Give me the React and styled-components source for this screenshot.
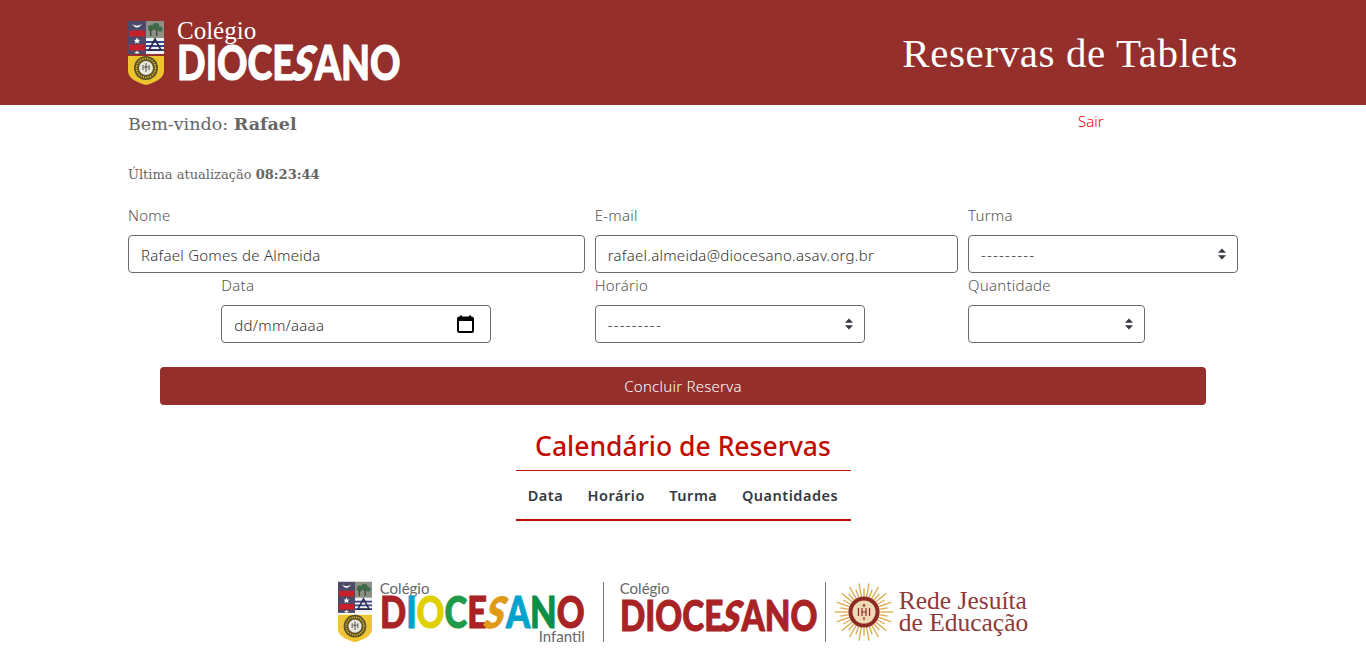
import React from "react";
import styled, { createGlobalStyle } from "styled-components";

const WINE = "#942f2c";
const LOGO_RED = "#a92224";
const RED = "#c00d00";
const SERIF = '"Liberation Serif", "DejaVu Serif", serif';
const SLAB = '"DejaVu Serif", "Liberation Serif", serif';
const SANS = '"Noto Sans", "Open Sans", sans-serif';
const INFANTIL_COLORS = ["#a92224", "#00a3cc", "#e0d000", "#1f9a48", "#a92224", "#e09a18", "#00a3cc", "#0a8f45", "#a92224"];

function Crest({ width, height }) {
  return (
    <svg width={width} height={height} viewBox="0 0 36 64">
      <rect x="0" y="0" width="18" height="33" fill="#4c4a68" />
      <path d="M4 3 Q9 10 14 3 Q9 6.5 4 3Z" fill="#fff" />
      <rect x="1" y="9.5" width="16" height="6" fill="#c8202a" />
      <path d="M9 16.5l1 2.2 2.3.2-1.8 1.4.6 2.2L9 21.5l-2.1 1 .6-2.2-1.8-1.4 2.3-.2z" fill="#fff" />
      <rect x="1" y="23.5" width="16" height="6" fill="#c8202a" />
      <path d="M9 29.5l.8 1.6 1.8.2-1.3 1.1H7.7l-1.3-1.1 1.8-.2z" fill="#fff" />
      <rect x="18" y="0" width="18" height="17" fill="#8d9084" />
      <circle cx="23" cy="7" r="3" fill="#3f6a4c" />
      <circle cx="28" cy="5.5" r="3.4" fill="#3f6a4c" />
      <circle cx="32" cy="8" r="2.6" fill="#3f6a4c" />
      <rect x="22" y="8" width="1.4" height="7" fill="#3a4a3a" />
      <rect x="28" y="8" width="1.4" height="7" fill="#3a4a3a" />
      <rect x="18" y="17" width="18" height="16" fill="#f2f2f6" />
      <path d="M18 21h18M18 25h18M18 29h18" stroke="#37448c" strokeWidth="1.8" />
      <path d="M27 18 L33 29 H21Z" fill="none" stroke="#2a2a45" strokeWidth="1.6" />
      <path d="M0 35 H36 V50 Q36 59 18 64 Q0 59 0 50Z" fill="#eec52e" />
      <circle cx="18" cy="47" r="12" fill="#5c5228" />
      <circle cx="18" cy="47" r="9.5" fill="none" stroke="#eec52e" strokeWidth="1.6" strokeDasharray="1.2 1.2" />
      <circle cx="18" cy="47" r="7" fill="#e9e6da" />
      <path d="M15 44v5M18 42v9M21 44v5M16 46h4" stroke="#4a4a4a" strokeWidth="1" fill="none" />
    </svg>
  );
}

function JesuitSun() {
  const rays = Array.from({ length: 36 }, (_, i) => (i * Math.PI * 2) / 36);
  return (
    <svg width="58" height="58" viewBox="0 0 58 58">
      {rays.map((a, i) => {
        const end = i % 2 ? 24 : 29;
        return (
          <line
            key={i}
            x1={29 + Math.cos(a) * 15}
            y1={29 + Math.sin(a) * 15}
            x2={29 + Math.cos(a) * end}
            y2={29 + Math.sin(a) * end}
            stroke="#dca94c"
            strokeWidth="1.3"
          />
        );
      })}
      <circle cx="29" cy="29" r="15.5" fill="#8f2a28" />
      <circle cx="29" cy="29" r="11.5" fill="#efd9b4" />
      <path d="M23.5 25v8M27 25v8M31 25v8M34.5 25v8M27 29h4M29 21v3M27.8 22.2h2.4M29 34v3" stroke="#8f2a28" strokeWidth="1.2" fill="none" />
    </svg>
  );
}

function CalendarIcon() {
  return (
    <svg width="17" height="18" viewBox="0 0 17 18">
      <path d="M4 0.5v3M13 0.5v3" stroke="#000" strokeWidth="2" />
      <rect x="1" y="2.5" width="15" height="14.5" rx="1.5" fill="none" stroke="#000" strokeWidth="2" />
      <rect x="1" y="2.5" width="15" height="3.5" fill="#000" />
    </svg>
  );
}

function SelectArrows() {
  return (
    <svg width="10" height="12" viewBox="0 0 10 12">
      <path d="M5 0.5 L9 4.8 H1Z M5 11.5 L1 7.2 H9Z" fill="#343a40" />
    </svg>
  );
}

function Wordmark({ size, width, colors, color, top }) {
  return (
    <WordmarkBox $size={size} $width={width} $top={top}>
      <WordmarkText $size={size} $color={color}>
        {"DIOCESANO".split("").map((letter, i) => (
          <WordmarkLetter key={i} $color={colors && colors[i]} $slant={letter === "S"}>
            {letter}
          </WordmarkLetter>
        ))}
      </WordmarkText>
    </WordmarkBox>
  );
}

export default function App() {
  return (
    <>
      <GlobalStyle />
      <Header>
        <HeaderInner>
          <HeaderLogo>
            <Crest width={36} height={64} />
            <LogoStack>
              <HeaderCollege>Colégio</HeaderCollege>
              <Wordmark size={47} width={226} color="#fff" top={-2} />
            </LogoStack>
          </HeaderLogo>
          <PageTitle>Reservas de Tablets</PageTitle>
        </HeaderInner>
      </Header>

      <Container>
        <WelcomeRow>
          <Welcome>
            Bem-vindo: <strong>Rafael</strong>
          </Welcome>
          <Logout href="#">Sair</Logout>
        </WelcomeRow>

        <Updated>
          Última atualização <strong>08:23:44</strong>
        </Updated>

        <FormGrid>
          <Field $span={5}>
            <Label>Nome</Label>
            <Input readOnly value="Rafael Gomes de Almeida" />
          </Field>
          <Field $span={4}>
            <Label>E-mail</Label>
            <Input readOnly value="rafael.almeida@diocesano.asav.org.br" />
          </Field>
          <Field $span={3}>
            <Label>Turma</Label>
            <Control>
              <Select defaultValue="">
                <option value="">---------</option>
              </Select>
              <ControlIcon><SelectArrows /></ControlIcon>
            </Control>
          </Field>

          <Field $start={2} $span={3}>
            <Label>Data</Label>
            <Control>
              <Input readOnly value="dd/mm/aaaa" />
              <ControlIcon $right={17}><CalendarIcon /></ControlIcon>
            </Control>
          </Field>
          <Field $start={6} $span={3}>
            <Label>Horário</Label>
            <Control>
              <Select defaultValue="">
                <option value="">---------</option>
              </Select>
              <ControlIcon><SelectArrows /></ControlIcon>
            </Control>
          </Field>
          <Field $start={10} $span={2}>
            <Label>Quantidade</Label>
            <Control>
              <Select defaultValue="">
                <option value=""></option>
              </Select>
              <ControlIcon><SelectArrows /></ControlIcon>
            </Control>
          </Field>
        </FormGrid>

        <SubmitButton type="button">Concluir Reserva</SubmitButton>

        <CalendarTable>
          <Caption>Calendário de Reservas</Caption>
          <thead>
            <tr>
              <HeadCell>Data</HeadCell>
              <HeadCell>Horário</HeadCell>
              <HeadCell>Turma</HeadCell>
              <HeadCell>Quantidades</HeadCell>
            </tr>
          </thead>
        </CalendarTable>

        <Footer>
          <FooterCrest>
            <Crest width={34} height={62} />
          </FooterCrest>
          <FooterBrand>
            <FooterCollege>Colégio</FooterCollege>
            <Wordmark size={43} width={205} colors={INFANTIL_COLORS} top={-5} />
            <Infantil>Infantil</Infantil>
          </FooterBrand>
          <Divider $left={18} $right={16} />
          <FooterBrand>
            <FooterCollege>Colégio</FooterCollege>
            <Wordmark size={41.5} width={197} color={LOGO_RED} top={0} />
          </FooterBrand>
          <Divider $left={8} $right={9} />
          <JesuitSun />
          <Network>
            Rede Jesuíta
            <br />
            de Educação
          </Network>
        </Footer>
      </Container>
    </>
  );
}

const GlobalStyle = createGlobalStyle`
  * {
    box-sizing: border-box;
  }
  body {
    margin: 0;
    background: #fff;
    font-family: ${SANS};
    color: #212529;
  }
`;

const Header = styled.header`
  height: 105px;
  background: ${WINE};
`;

const HeaderInner = styled.div`
  width: 1110px;
  height: 100%;
  margin: 0 auto;
  display: flex;
  align-items: center;
  justify-content: space-between;
`;

const HeaderLogo = styled.div`
  display: flex;
  align-items: flex-start;
  gap: 13px;
  padding-top: 2px;
`;

const LogoStack = styled.div`
  display: flex;
  flex-direction: column;
`;

const HeaderCollege = styled.span`
  font-family: ${SERIF};
  font-size: 25px;
  line-height: 20px;
  color: #fff;
`;

const WordmarkBox = styled.div`
  width: ${(p) => p.$width}px;
  height: ${(p) => p.$size}px;
  margin-top: ${(p) => p.$top}px;
  overflow: visible;
`;

/* the logo lettering is narrower and heavier than any installed face */
const WordmarkText = styled.span`
  display: inline-block;
  font-family: "Lato", sans-serif;
  font-weight: 900;
  font-size: ${(p) => p.$size}px;
  line-height: 1;
  color: ${(p) => p.$color || "#fff"};
  white-space: nowrap;
  -webkit-text-stroke: 1px currentColor;
  transform: scaleX(0.8);
  transform-origin: left center;
`;

const WordmarkLetter = styled.span`
  color: ${(p) => p.$color || "inherit"};
  display: inline-block;
  transform: ${(p) => (p.$slant ? "skewX(-22deg)" : "none")};
`;

const PageTitle = styled.h1`
  margin: 0;
  font-family: ${SERIF};
  font-weight: 400;
  font-size: 41px;
  letter-spacing: 0.6px;
  color: #fff;
`;

const Container = styled.main`
  width: 1110px;
  margin: 0 auto;
`;

const WelcomeRow = styled.div`
  display: flex;
  height: 38px;
`;

const Welcome = styled.div`
  width: 950px;
  font-family: ${SLAB};
  font-size: 17.5px;
  line-height: 38px;
  color: #666;
`;

const Logout = styled.a`
  font-size: 15px;
  font-weight: 300;
  line-height: 33px;
  color: #f00;
  text-decoration: none;
`;

const Updated = styled.div`
  margin-top: 20px;
  font-family: ${SLAB};
  font-size: 13px;
  line-height: 24px;
  color: #666;
`;

const FormGrid = styled.div`
  width: 1120px;
  margin: 16px 0 0 -5px;
  display: grid;
  grid-template-columns: repeat(12, 1fr);
`;

const Field = styled.div`
  grid-column: ${(p) => (p.$start ? `${p.$start} / span ${p.$span}` : `span ${p.$span}`)};
  padding: 0 5px;
`;

const Label = styled.label`
  display: block;
  margin-bottom: 8px;
  font-size: 15px;
  font-weight: 300;
  letter-spacing: 0.25px;
  line-height: 25px;
  height: 24px;
  color: #555;
`;

const Control = styled.div`
  position: relative;
`;

const Input = styled.input`
  display: block;
  width: 100%;
  height: 38px;
  padding: 7px 12px 5px;
  border: 1px solid #6c6c6c;
  border-radius: 4px;
  font-family: ${SANS};
  font-size: 15px;
  font-weight: 300;
  letter-spacing: 0.25px;
  color: #333;
  background: #fff;
  outline: none;
`;

const Select = styled.select`
  display: block;
  width: 100%;
  height: 38px;
  padding: 6px 12px;
  border: 1px solid #6c6c6c;
  border-radius: 4px;
  font-family: ${SANS};
  font-size: 15px;
  font-weight: 300;
  letter-spacing: 1.2px;
  color: #333;
  background: #fff;
  appearance: none;
  outline: none;
`;

const ControlIcon = styled.span`
  position: absolute;
  top: 50%;
  right: ${(p) => p.$right || 11}px;
  transform: translateY(-50%);
  display: flex;
  pointer-events: none;
`;

const SubmitButton = styled.button`
  display: block;
  width: 1046px;
  height: 38px;
  margin: 24px auto 0;
  border: 0;
  border-radius: 4px;
  background: ${WINE};
  color: #fff;
  font-family: ${SANS};
  font-size: 15px;
  font-weight: 300;
  letter-spacing: 0.25px;
`;

const CalendarTable = styled.table`
  width: 335px;
  margin: 24px auto 0;
  border-collapse: collapse;
  caption-side: top;
  border-bottom: 2px solid ${RED};
`;

const Caption = styled.caption`
  height: 42px;
  border-bottom: 1px solid ${RED};
  font-size: 26.5px;
  font-weight: 500;
  line-height: 35px;
  color: ${RED};
`;

const HeadCell = styled.th`
  height: 49px;
  padding: 0 12px;
  font-size: 14.5px;
  font-weight: 600;
  letter-spacing: 0.5px;
  color: #343a40;
  white-space: nowrap;
`;

const Footer = styled.footer`
  margin-top: 60px;
  display: flex;
  align-items: center;
  justify-content: center;
  height: 62px;
`;

const FooterCrest = styled.div`
  display: flex;
  margin-right: 8px;
`;

const FooterBrand = styled.div`
  display: flex;
  flex-direction: column;
  align-self: stretch;
`;

const FooterCollege = styled.span`
  font-family: "Lato", sans-serif;
  font-size: 15px;
  line-height: 14px;
  color: #666;
`;

const Infantil = styled.span`
  align-self: flex-end;
  margin-top: -4px;
  font-family: "Lato", sans-serif;
  font-size: 15px;
  line-height: 15px;
  color: #666;
`;

const Divider = styled.div`
  width: 1px;
  height: 60px;
  margin: 0 ${(p) => p.$right}px 0 ${(p) => p.$left}px;
  background: #777;
`;

const Network = styled.div`
  margin-left: 6px;
  font-family: ${SERIF};
  font-size: 25.5px;
  line-height: 22px;
  color: #8f3a38;
`;
